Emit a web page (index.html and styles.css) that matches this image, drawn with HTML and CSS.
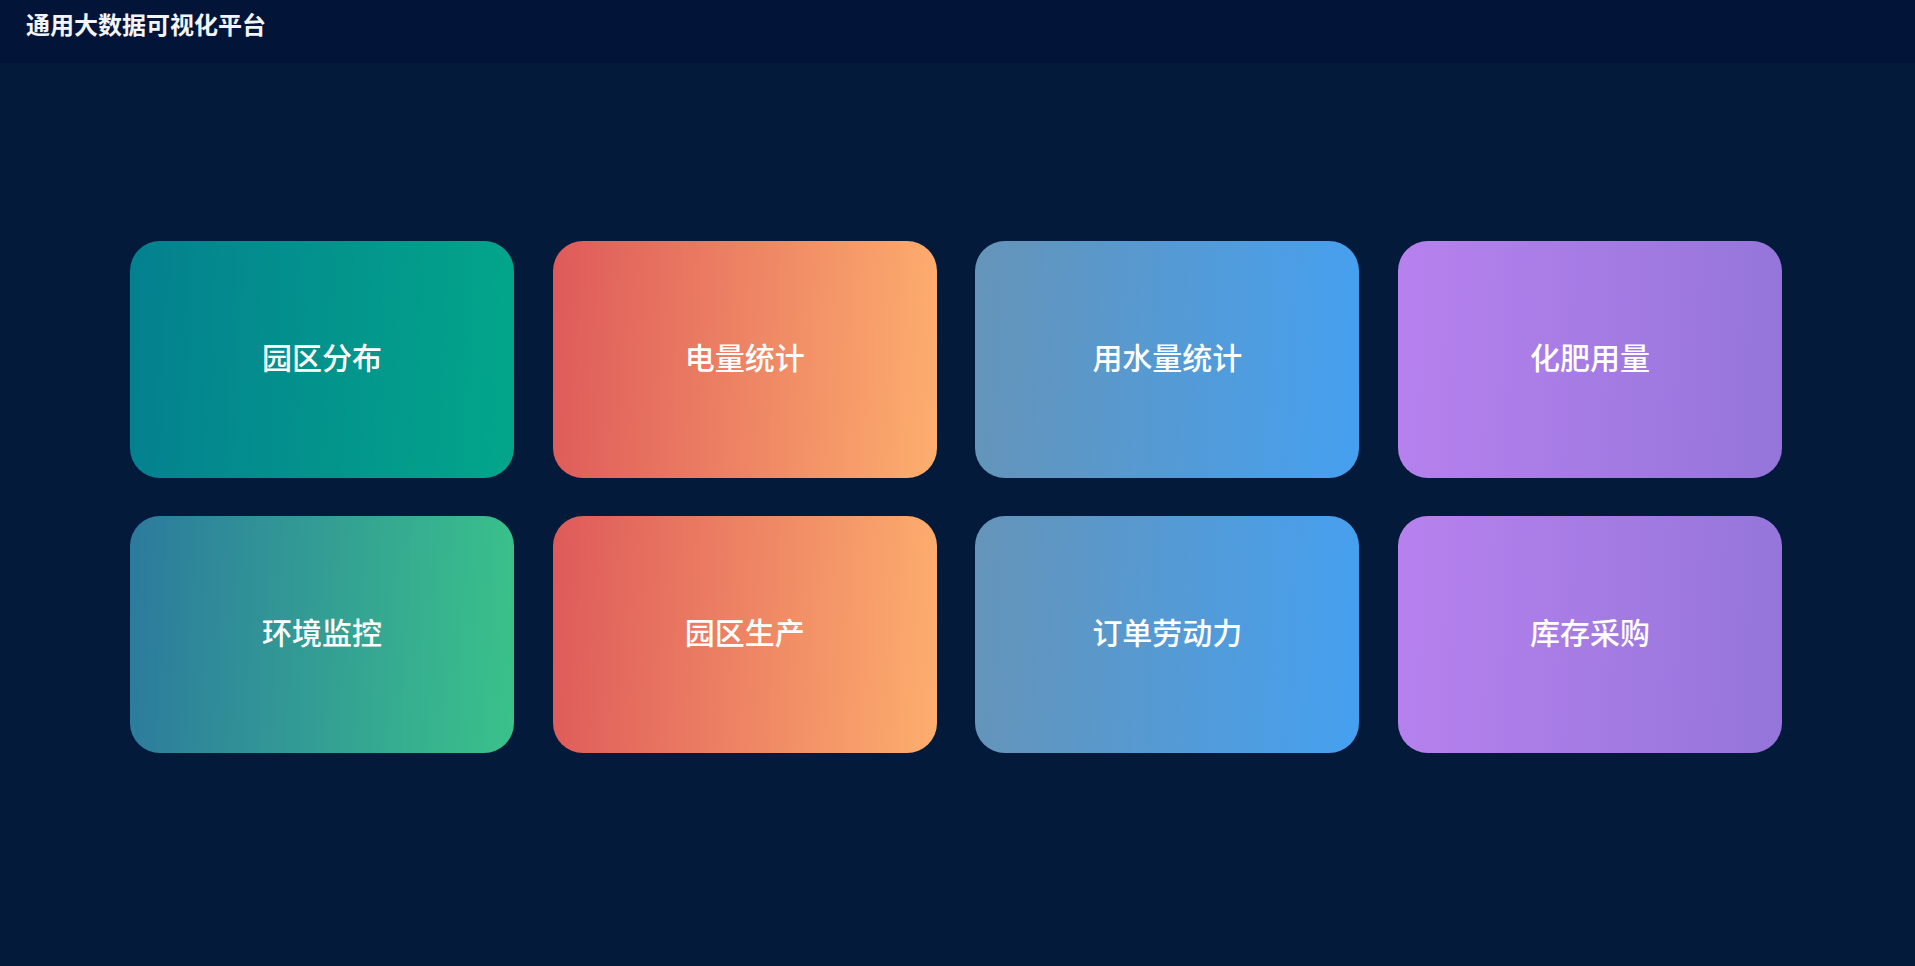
FILE: index.html
```html
<!DOCTYPE html>
<html lang="zh-CN">
<head>
<meta charset="utf-8">
<title>通用大数据可视化平台</title>
<link rel="stylesheet" href="styles.css">
</head>
<body>
<header class="header">
  <h1 class="title">通用大数据可视化平台</h1>
</header>
<main class="main">
  <div class="grid">
    <a class="card teal">园区分布</a>
    <a class="card coral">电量统计</a>
    <a class="card blue">用水量统计</a>
    <a class="card purple">化肥用量</a>
    <a class="card green">环境监控</a>
    <a class="card coral">园区生产</a>
    <a class="card blue">订单劳动力</a>
    <a class="card purple">库存采购</a>
  </div>
</main>
</body>
</html>
```
FILE: styles.css
```css
* { box-sizing: border-box; }
html, body {
  margin: 0;
  padding: 0;
  height: 100%;
}
body {
  background: #041a3a;
  font-family: "Noto Sans CJK SC", "Noto Sans", sans-serif;
  color: #fff;
  overflow: hidden;
}
.header {
  height: 63px;
  background: #021538;
  display: flex;
  align-items: center;
  padding-left: 26px;
}
.title {
  margin: 0;
  font-size: 24px;
  font-weight: 700;
  color: #f2f4f8;
  line-height: 1;
  margin-top: -16px;
}
.main {
  padding-top: 178px;
  padding-left: 130px;
  display: flex;
  justify-content: flex-start;
}
.grid {
  display: grid;
  grid-template-columns: repeat(4, 384px);
  grid-auto-rows: 237px;
  column-gap: 38.7px;
  row-gap: 38px;
}
.card {
  border-radius: 30px;
  display: flex;
  align-items: center;
  justify-content: center;
  padding-bottom: 8px;
  font-size: 30px;
  font-weight: 500;
  color: #fff;
  text-decoration: none;
  cursor: pointer;
}
.teal { background: linear-gradient(93deg, #04808f, #02a68a); }
.green { background: linear-gradient(93deg, #2c7a9d, #3ac28a); }
.coral { background: linear-gradient(93deg, #de5a5a, #fdae6e); }
.blue { background: linear-gradient(93deg, #6594b8, #45a0f0); }
.purple { background: linear-gradient(93deg, #b781ee, #9475da); }
```
